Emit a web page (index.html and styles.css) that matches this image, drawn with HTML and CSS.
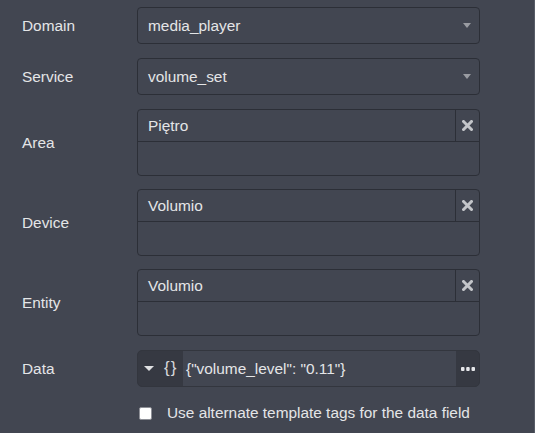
FILE: index.html
```html
<!DOCTYPE html>
<html>
<head>
<meta charset="utf-8">
<link rel="stylesheet" href="styles.css">
</head>
<body>
<div class="form">
  <div class="row">
    <div class="label">Domain</div>
    <div class="select">
      <span class="value">media_player</span>
      <svg class="caret" width="8" height="5" viewBox="0 0 8 5"><path d="M0 0H8L4 5Z" fill="#9a9ca2"/></svg>
    </div>
  </div>
  <div class="row">
    <div class="label">Service</div>
    <div class="select">
      <span class="value">volume_set</span>
      <svg class="caret" width="8" height="5" viewBox="0 0 8 5"><path d="M0 0H8L4 5Z" fill="#9a9ca2"/></svg>
    </div>
  </div>
  <div class="row">
    <div class="label">Area</div>
    <div class="multi">
      <div class="multi-top">
        <span class="tag">Piętro</span>
        <span class="clear"><svg width="11" height="11" viewBox="0 0 11 11"><path d="M1.5 1.5L9.5 9.5M9.5 1.5L1.5 9.5" stroke="#c3c5c9" stroke-width="3" stroke-linecap="square"/></svg></span>
      </div>
      <div class="multi-bottom"></div>
    </div>
  </div>
  <div class="row">
    <div class="label">Device</div>
    <div class="multi">
      <div class="multi-top">
        <span class="tag">Volumio</span>
        <span class="clear"><svg width="11" height="11" viewBox="0 0 11 11"><path d="M1.5 1.5L9.5 9.5M9.5 1.5L1.5 9.5" stroke="#c3c5c9" stroke-width="3" stroke-linecap="square"/></svg></span>
      </div>
      <div class="multi-bottom"></div>
    </div>
  </div>
  <div class="row">
    <div class="label">Entity</div>
    <div class="multi">
      <div class="multi-top">
        <span class="tag">Volumio</span>
        <span class="clear"><svg width="11" height="11" viewBox="0 0 11 11"><path d="M1.5 1.5L9.5 9.5M9.5 1.5L1.5 9.5" stroke="#c3c5c9" stroke-width="3" stroke-linecap="square"/></svg></span>
      </div>
      <div class="multi-bottom"></div>
    </div>
  </div>
  <div class="row">
    <div class="label">Data</div>
    <div class="typed">
      <div class="type-btn">
        <svg width="10" height="5" viewBox="0 0 10 5"><path d="M0 0H10L5 5Z" fill="#e0e1e3"/></svg>
        <span class="braces">{}</span>
      </div>
      <div class="typed-value">{"volume_level": "0.11"}</div>
      <div class="more-btn">
        <svg width="14" height="4" viewBox="0 0 14 4"><rect x="0" y="0" width="3.5" height="4" rx="1" fill="#e6e7ea"/><rect x="5.2" y="0" width="3.5" height="4" rx="1" fill="#e6e7ea"/><rect x="10.5" y="0" width="3.5" height="4" rx="1" fill="#e6e7ea"/></svg>
      </div>
    </div>
  </div>
  <div class="check-row">
    <span class="checkbox"></span>
    <span class="check-label">Use alternate template tags for the data field</span>
  </div>
</div>
</body>
</html>
```

FILE: styles.css
```css
html, body {
  margin: 0;
  padding: 0;
}
body {
  background: #424651;
  color: #e4e5e7;
  font-family: "Liberation Sans", Arial, sans-serif;
  font-size: 15.4px;
  width: 535px;
  height: 433px;
  overflow: hidden;
  box-sizing: border-box;
  border-right: 1px solid #575b66;
}
.form {
  padding: 7px 0 0 22px;
}
.row {
  display: flex;
  align-items: center;
  margin-bottom: 14px;
}
.row:nth-child(3), .row:nth-child(4) {
  margin-bottom: 13px;
}
.label {
  width: 115px;
  flex: none;
}
.select {
  width: 343px;
  height: 37px;
  box-sizing: border-box;
  border: 1px solid #2c2f37;
  border-radius: 4px;
  display: flex;
  align-items: center;
  justify-content: space-between;
  padding: 0 8px 0 10px;
}
.caret {
  display: block;
}
.multi {
  width: 343px;
  box-sizing: border-box;
  border: 1px solid #2c2f37;
  border-radius: 4px;
}
.multi-top {
  display: flex;
  height: 31px;
  border-bottom: 1px solid #2c2f37;
}
.tag {
  flex: 1;
  padding-left: 10px;
  line-height: 31px;
}
.clear {
  width: 23px;
  border-left: 1px solid #2c2f37;
  display: flex;
  align-items: center;
  justify-content: center;
}
.multi-bottom {
  height: 33px;
}
.typed {
  width: 343px;
  height: 37px;
  box-sizing: border-box;
  border-radius: 5px;
  background: #363942;
  border: 1px solid #33363e;
  display: flex;
  overflow: hidden;
}
.type-btn {
  width: 45px;
  flex: none;
  display: flex;
  align-items: center;
  padding-left: 6px;
  box-sizing: border-box;
  gap: 10px;
}
.braces {
  color: #d6d7da;
  font-size: 17px;
  letter-spacing: 1px;
  margin-top: -1px;
}
.typed-value {
  flex: 1;
  background: #424651;
  display: flex;
  align-items: center;
  padding-left: 3px;
}
.more-btn {
  width: 23px;
  flex: none;
  display: flex;
  align-items: center;
  justify-content: center;
}
.check-row {
  display: flex;
  align-items: center;
  margin-left: 117px;
  margin-top: 17px;
}
.checkbox {
  width: 13px;
  height: 13px;
  box-sizing: border-box;
  background: #ffffff;
  border: 1px solid #8e9097;
  border-radius: 2px;
  flex: none;
}
.check-label {
  margin-left: 15px;
}
```
